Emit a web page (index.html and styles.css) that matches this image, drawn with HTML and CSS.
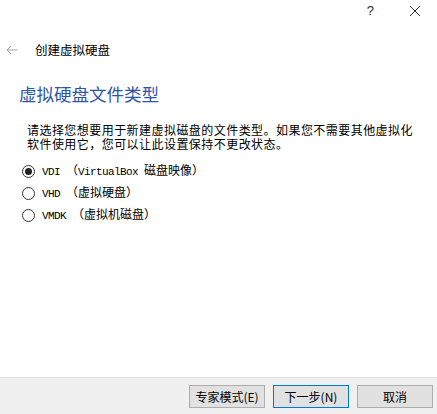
FILE: index.html
```html
<!DOCTYPE html>
<html lang="zh-CN">
<head>
<meta charset="utf-8">
<title>创建虚拟硬盘</title>
<link rel="stylesheet" href="styles.css">
</head>
<body>
<div class="window">
  <div class="titlebar">
    <span class="help">?</span>
    <span class="close">
      <svg width="12" height="12" viewBox="0 0 12 12"><path d="M1 1 L11 11 M11 1 L1 11" stroke="#333" stroke-width="1" fill="none"/></svg>
    </span>
  </div>
  <div class="nav">
    <span class="back">
      <svg width="12" height="10" viewBox="0 0 12 10"><path d="M11.5 5 H1 M5 1 L1 5 L5 9" stroke="#a0a0a0" stroke-width="1" fill="none"/></svg>
    </span>
    <span class="nav-title">创建虚拟硬盘</span>
  </div>
  <div class="content">
    <h1 class="heading">虚拟硬盘文件类型</h1>
    <p class="desc"><span class="line">请选择您想要用于新建虚拟磁盘的文件类型。如果您不需要其他虚拟化</span><span class="line">软件使用它，您可以让此设置保持不更改状态。</span></p>
    <div class="options">
      <label class="option"><span class="radio checked"></span><span class="label"><span class="latin">VDI </span>（<span class="latin">VirtualBox </span>磁盘映像）</span></label>
      <label class="option"><span class="radio"></span><span class="label"><span class="latin">VHD </span>（虚拟硬盘）</span></label>
      <label class="option"><span class="radio"></span><span class="label"><span class="latin">VMDK </span>（虚拟机磁盘）</span></label>
    </div>
  </div>
  <div class="footer">
    <button class="btn">专家模式(E)</button>
    <button class="btn default">下一步(N)</button>
    <button class="btn">取消</button>
  </div>
</div>
</body>
</html>
```
FILE: styles.css
```css
html, body {
  margin: 0;
  padding: 0;
  background: #ffffff;
}
.window {
  width: 437px;
  height: 414px;
  display: flex;
  flex-direction: column;
  font-family: "Noto Sans CJK SC", "Liberation Sans", sans-serif;
  color: #000;
  overflow: hidden;
}
.titlebar {
  height: 22px;
  display: flex;
  justify-content: flex-end;
  align-items: center;
  padding-right: 16px;
  gap: 35px;
}
.help {
  font-family: "Liberation Sans", sans-serif;
  font-size: 13px;
  color: #222;
  line-height: 14px;
}
.close {
  display: flex;
  align-items: center;
}
.nav {
  margin-top: 18px;
  height: 20px;
  display: flex;
  align-items: center;
  padding-left: 6px;
  gap: 17px;
}
.back {
  display: flex;
  align-items: center;
}
.nav-title {
  font-size: 12.5px;
  line-height: 20px;
  color: #000;
}
.content {
  flex: 1;
}
.heading {
  margin: 22px 0 0 19px;
  font-size: 17.5px;
  line-height: 24px;
  font-weight: normal;
  color: #2e55a8;
}
.desc {
  margin: 17px 0 0 27px;
  font-size: 12px;
  letter-spacing: 0.45px;
  display: flex;
  flex-direction: column;
}
.line {
  display: block;
  height: 14px;
  line-height: 14px;
  white-space: nowrap;
}
.options {
  margin-top: 9px;
  padding-left: 22px;
  display: flex;
  flex-direction: column;
}
.option {
  height: 22px;
  display: flex;
  align-items: center;
  gap: 7px;
  font-size: 12px;
}
.radio {
  width: 11px;
  height: 11px;
  border: 1px solid #333;
  border-radius: 50%;
  background: #fff;
  display: flex;
  align-items: center;
  justify-content: center;
}
.radio.checked::after {
  content: "";
  width: 7px;
  height: 7px;
  border-radius: 50%;
  background: #222;
}
.label {
  line-height: 14px;
  white-space: nowrap;
}
.latin {
  font-family: "Liberation Mono", monospace;
  font-size: 11px;
  letter-spacing: -0.6px;
}
.footer {
  border-top: 1px solid #dfdfdf;
  background: #f0f0f0;
  display: flex;
  justify-content: flex-end;
  align-items: flex-start;
  padding: 7px 4px 0 0;
  box-sizing: border-box;
  height: 37px;
  gap: 8px;
}
.btn {
  width: 76px;
  height: 23px;
  padding: 0;
  margin: 0;
  border: 1px solid #adadad;
  background: #e1e1e1;
  font-family: "Noto Sans CJK SC", "Liberation Sans", sans-serif;
  font-size: 12px;
  color: #000;
  line-height: 21px;
}
.btn.default {
  border-color: #0078d7;
}
```
